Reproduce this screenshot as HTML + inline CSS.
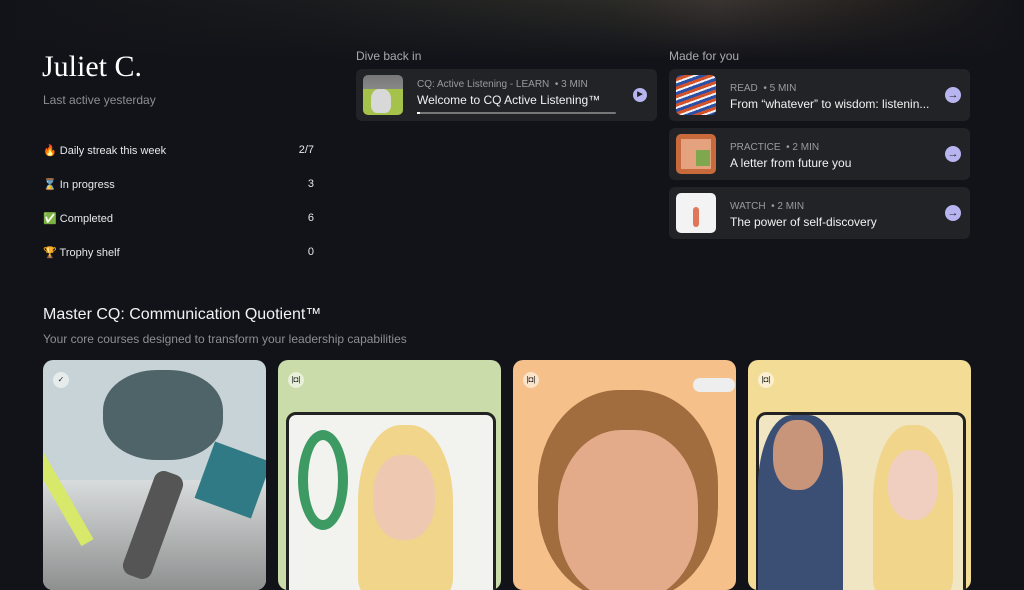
<!DOCTYPE html>
<html><head><meta charset="utf-8"><style>
*{margin:0;padding:0;box-sizing:border-box}
body{width:1024px;height:573px;overflow:hidden;background:#121319;font-family:"Liberation Sans",sans-serif;color:#eee;position:relative}
.top{position:absolute;left:0;top:0;width:1024px;height:60px;background:linear-gradient(90deg,#121319 0%,#1a1b1d 30%,#2a2a26 60%,#3a3430 70%,#25221f 85%,#121319 100%);}
.top:after{content:"";position:absolute;inset:0;background:linear-gradient(180deg,rgba(18,19,25,0) 0%,#121319 100%)}
.abs{position:absolute}
.name{left:42px;top:50px;font-family:"Liberation Serif",serif;font-size:30px;color:#fff}
.sub{left:43px;top:93px;font-size:12px;color:#8d8e93}
.stat{left:43px;width:271px;font-size:11px;color:#e8e8ea;display:flex;justify-content:space-between}
.lbl{font-size:12px;color:#a8a9ad}
.card{background:#222327;border-radius:6px}
.thumb{position:absolute;left:7px;top:6px;width:40px;height:40px;border-radius:5px}
.meta{position:absolute;left:61px;font-size:10px;color:#9a9ba0}
.title{position:absolute;left:61px;font-size:12px;color:#f2f2f2;white-space:nowrap}
.arr{position:absolute;right:9px;top:18px;width:16px;height:16px;border-radius:50%;background:#b7b4f0;color:#222;font-size:11px;text-align:center;line-height:16px;font-weight:bold}
.big{top:360px;width:223px;height:230px;border-radius:10px;overflow:hidden}
.badge{position:absolute;left:10px;top:12px;width:16px;height:16px;border-radius:50%;background:rgba(255,255,255,.55);font-size:8px;color:#222;text-align:center;line-height:16px}
</style></head><body>
<div class="top"></div>
<div class="abs name">Juliet C.</div>
<div class="abs sub">Last active yesterday</div>
<div class="abs stat" style="top:144px"><span>🔥 Daily streak this week</span><span>2/7</span></div>
<div class="abs stat" style="top:178px"><span>⌛ In progress</span><span>3</span></div>
<div class="abs stat" style="top:212px"><span>✅ Completed</span><span>6</span></div>
<div class="abs stat" style="top:246px"><span>🏆 Trophy shelf</span><span>0</span></div>

<div class="abs lbl" style="left:356px;top:49px">Dive back in</div>
<div class="abs card" style="left:356px;top:69px;width:301px;height:52px">
 <div class="thumb" style="background:linear-gradient(180deg,#777 0%,#888 35%,#a5c24a 35%,#a5c24a 100%)"><div style="position:absolute;left:8px;top:14px;width:20px;height:24px;background:#d8d8d8;border-radius:40% 40% 30% 30%"></div></div>
 <div class="meta" style="top:10px">CQ: Active Listening - LEARN &nbsp;• 3 MIN</div>
 <div class="title" style="top:24px">Welcome to CQ Active Listening™</div>
 <div class="abs" style="left:61px;top:43px;width:199px;height:2px;background:#777;border-radius:1px"><div style="width:3px;height:2px;background:#fff"></div></div>
 <div class="arr" style="right:10px;top:19px;width:14px;height:14px;line-height:14px;font-size:7px">▶</div>
</div>

<div class="abs lbl" style="left:669px;top:49px">Made for you</div>
<div class="abs card" style="left:669px;top:69px;width:301px;height:52px">
 <div class="thumb" style="background:repeating-linear-gradient(160deg,#2b4fa6 0 3px,#d3522a 3px 6px,#f2f2f2 6px 8px)"></div>
 <div class="meta" style="top:14px">READ &nbsp;• 5 MIN</div>
 <div class="title" style="top:28px">From “whatever” to wisdom: listenin...</div>
 <div class="arr">→</div>
</div>
<div class="abs card" style="left:669px;top:128px;width:301px;height:52px">
 <div class="thumb" style="background:#c96a3c"><div style="position:absolute;left:5px;top:5px;width:30px;height:30px;background:#e4a27e"></div><div style="position:absolute;left:20px;top:16px;width:14px;height:16px;background:#7ea74e"></div></div>
 <div class="meta" style="top:14px">PRACTICE &nbsp;• 2 MIN</div>
 <div class="title" style="top:28px">A letter from future you</div>
 <div class="arr">→</div>
</div>
<div class="abs card" style="left:669px;top:187px;width:301px;height:52px">
 <div class="thumb" style="background:#f3f3f3"><div style="position:absolute;left:17px;top:14px;width:6px;height:20px;background:#e0765a;border-radius:3px"></div></div>
 <div class="meta" style="top:14px">WATCH &nbsp;• 2 MIN</div>
 <div class="title" style="top:28px">The power of self-discovery</div>
 <div class="arr">→</div>
</div>

<div class="abs" style="left:43px;top:306px;font-size:16px;color:#f2f2f2">Master CQ: Communication Quotient™</div>
<div class="abs" style="left:43px;top:332px;font-size:12px;color:#8d8e93">Your core courses designed to transform your leadership capabilities</div>

<div class="abs big" style="left:43px;background:#c7d3d6">
 <div class="abs" style="left:60px;top:10px;width:120px;height:90px;background:#4f6468;border-radius:45%"></div>
 <div class="abs" style="left:0;top:120px;width:223px;height:110px;background:linear-gradient(180deg,#d9dcdc,#8e9090)"></div>
 <div class="abs" style="left:95px;top:110px;width:30px;height:110px;background:#555;border-radius:10px;transform:rotate(20deg)"></div>
 <div class="abs" style="left:10px;top:80px;width:14px;height:110px;background:#d8e86a;transform:rotate(-30deg)"></div>
 <div class="abs" style="left:160px;top:90px;width:60px;height:60px;background:#2f7a84;transform:rotate(20deg)"></div>
 <div class="badge">✓</div>
</div>
<div class="abs big" style="left:278px;background:#cadca9">
 <div class="abs" style="left:8px;top:52px;width:210px;height:200px;background:#f2f2ee;border:3px solid #222;border-radius:10px"></div>
 <div class="abs" style="left:20px;top:70px;width:50px;height:100px;border:10px solid #3d9a63;border-radius:50%"></div>
 <div class="abs" style="left:80px;top:65px;width:95px;height:170px;background:#f0d58a;border-radius:45% 45% 10% 10%"></div>
 <div class="abs" style="left:95px;top:95px;width:62px;height:85px;background:#efc8b2;border-radius:45%"></div>
 <div class="badge">|◘|</div>
</div>
<div class="abs big" style="left:513px;background:#f5c089">
 <div class="abs" style="left:25px;top:30px;width:180px;height:210px;background:#a16c3e;border-radius:45%"></div>
 <div class="abs" style="left:45px;top:70px;width:140px;height:170px;background:#e4ab8a;border-radius:45%"></div>
 <div class="abs" style="left:180px;top:18px;width:42px;height:14px;background:#eee;border-radius:7px"></div>
 <div class="badge">|◘|</div>
</div>
<div class="abs big" style="left:748px;background:#f3dc95">
 <div class="abs" style="left:8px;top:52px;width:210px;height:200px;background:#f0e6c3;border:3px solid #222;border-radius:10px"></div>
 <div class="abs" style="left:10px;top:55px;width:85px;height:180px;background:#3b4f75;border-radius:40% 40% 0 0"></div>
 <div class="abs" style="left:25px;top:60px;width:50px;height:70px;background:#c8957a;border-radius:45%"></div>
 <div class="abs" style="left:125px;top:65px;width:80px;height:170px;background:#f0d58a;border-radius:45% 45% 10% 10%"></div>
 <div class="abs" style="left:140px;top:90px;width:50px;height:70px;background:#f0cfc0;border-radius:45%"></div>
 <div class="badge">|◘|</div>
</div>
</body></html>
